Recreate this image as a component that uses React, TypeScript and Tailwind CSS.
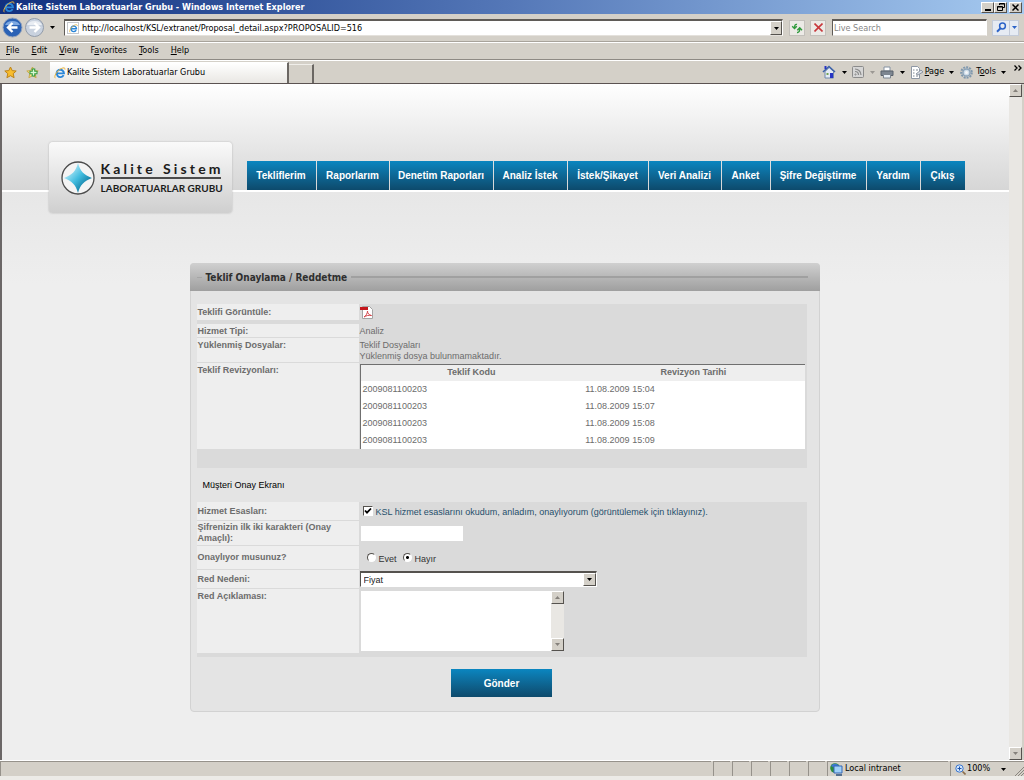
import React, { useState } from 'react';

const navItems = [
  { label: 'Tekliflerim', width: 'w-[69px]' },
  { label: 'Raporlarım', width: 'w-[72px]' },
  { label: 'Denetim Raporları', width: 'w-[103px]' },
  { label: 'Analiz İstek', width: 'w-[73px]' },
  { label: 'İstek/Şikayet', width: 'w-[80px]' },
  { label: 'Veri Analizi', width: 'w-[72px]' },
  { label: 'Anket', width: 'w-[48px]' },
  { label: 'Şifre Değiştirme', width: 'w-[95px]' },
  { label: 'Yardım', width: 'w-[53px]' },
  { label: 'Çıkış', width: 'w-[44px]' },
];

const revisions = [
  { code: '2009081100203', date: '11.08.2009 15:04' },
  { code: '2009081100203', date: '11.08.2009 15:07' },
  { code: '2009081100203', date: '11.08.2009 15:08' },
  { code: '2009081100203', date: '11.08.2009 15:09' },
];

const menus = [
  ['', 'F', 'ile'],
  ['', 'E', 'dit'],
  ['', 'V', 'iew'],
  ['F', 'a', 'vorites'],
  ['', 'T', 'ools'],
  ['', 'H', 'elp'],
];

const raised = 'border border-t-white border-l-white border-r-[#55524e] border-b-[#55524e] bg-[#d4d0c8]';

const Arrow = ({ up = false, color = '#000' }: { up?: boolean; color?: string }) => (
  <svg width="5" height="3" viewBox="0 0 5 3" fill={color} className="shrink-0">
    <path d={up ? 'M0 3h5L2.5 0z' : 'M0 0h5L2.5 3z'} />
  </svg>
);

const IeLogo = ({ size = 12 }: { size?: number }) => (
  <svg width={size} height={size} viewBox="0 0 12 12" fill="none" className="shrink-0">
    <path d="M9.6 8.1A3.7 3.7 0 1 1 10 6.4H3.2" stroke="#2a86d8" strokeWidth="1.9" />
    <path d="M1.4 11.2C-.6 9.6 3 3.6 7.2 1.6 9.6.4 11.4.6 11 2.6" stroke="#e8b33c" strokeWidth="1" />
  </svg>
);

const TitleBar = () => (
  <div className="flex h-[14px] items-center bg-linear-to-r from-[#12307f] via-[#5578b8] to-[#a6caf0] pl-[3px] pr-[2px]">
    <IeLogo />
    <span className="ml-px flex-1 whitespace-nowrap text-[9px] leading-[14px] font-bold text-white">
      Kalite Sistem Laboratuarlar Grubu - Windows Internet Explorer
    </span>
    <button aria-label="Minimize" className={`flex h-[11px] w-[13px] items-end justify-center pb-px ${raised}`}>
      <svg width="6" height="2"><path d="M0 0h6v2H0z" /></svg>
    </button>
    <button aria-label="Restore" className={`flex h-[11px] w-[13px] items-center justify-center ${raised}`}>
      <svg width="8" height="8" fill="none" stroke="#000"><path d="M2.5 2V.5h5v4H6M.5 3.5h5v4h-5zM2.5 1h5M.5 4h5" /></svg>
    </button>
    <button aria-label="Close" className={`ml-[2px] flex h-[11px] w-[13px] items-center justify-center ${raised}`}>
      <svg width="7" height="7" stroke="#000" strokeWidth="1.5"><path d="M.5.5l6 6M6.5.5l-6 6" /></svg>
    </button>
  </div>
);

const AddressBar = () => (
  <div className="flex h-[28px] items-center border-b border-[#a8a39b] pl-[2px] pr-[5px]">
    <button aria-label="Back">
      <svg width="21" height="21" viewBox="0 0 21 21">
        <circle cx="10.5" cy="10.5" r="9.5" fill="#2b62b5" stroke="#93a3bd" />
        <path d="M3 8a8 6 0 0 1 15 0z" fill="#7ea9e2" />
        <path d="M15.5 10.5H6.5M10.5 6l-4.5 4.5 4.5 4.5" stroke="#fff" strokeWidth="2.4" fill="none" />
      </svg>
    </button>
    <button aria-label="Forward" className="ml-px">
      <svg width="21" height="21" viewBox="0 0 21 21">
        <circle cx="10.5" cy="10.5" r="9" fill="#c9d2df" stroke="#929cab" />
        <path d="M3 8a8 6 0 0 1 15 0z" fill="#e9edf3" />
        <path d="M5.5 10.5h9M10.5 6l4.5 4.5-4.5 4.5" stroke="#fff" strokeWidth="2.4" fill="none" />
      </svg>
    </button>
    <button aria-label="Recent pages" className="ml-[5px]"><Arrow /></button>
    <div className="ml-[9px] flex h-[17px] flex-1 items-center border border-t-2 border-[#5f5b57] border-r-white border-b-[#e4e1dc] bg-white pl-[2px]">
      <div className="flex size-[12px] items-center justify-center border border-[#c5c8cc]"><IeLogo size={9} /></div>
      <input
        aria-label="Address"
        defaultValue="http://localhost/KSL/extranet/Proposal_detail.aspx?PROPOSALID=516"
        className="ml-[3px] min-w-0 flex-1 text-[9px] leading-[13px] outline-none"
      />
      <button aria-label="Show addresses" className={`flex h-[14px] w-[12px] items-center justify-center ${raised}`}><Arrow /></button>
    </div>
    <button aria-label="Refresh" className="ml-[6px] flex size-[16px] items-center justify-center border border-[#c3c0bb] bg-[#eceae6]">
      <svg width="12" height="12" viewBox="0 0 12 12" fill="none" stroke="#2f9a3c" strokeWidth="1.4">
        <path d="M6 2.5C4.5 2 3.5 3 3.5 6M1.2 4.2l2.3 2.3 2.3-2.3M6 10.5c1.8.2 2.7-1 2.7-4M6.3 8.2l2.4-2.5 2.3 2.5" />
      </svg>
    </button>
    <button aria-label="Stop" className="ml-[5px] flex size-[16px] items-center justify-center border border-[#c3c0bb] bg-[#eceae6]">
      <svg width="9" height="9" stroke="#c8383c" strokeWidth="1.6"><path d="M.5.5l8 8M8.5.5l-8 8" /></svg>
    </button>
    <input
      aria-label="Live Search"
      placeholder="Live Search"
      className="ml-[6px] h-[17px] w-[155px] border border-t-2 border-[#5f5b57] border-r-white border-b-[#e4e1dc] bg-white pl-px text-[9px] leading-[13px] outline-none placeholder:text-[#858585]"
    />
    <div className="ml-[5px] flex h-[16px] border border-[#c3cbd9] bg-[#e6ebf3]">
      <button aria-label="Search" className="flex w-[16px] items-center justify-center">
        <svg width="11" height="11" fill="none" stroke="#2c63c8"><circle cx="6.5" cy="4" r="2.9" strokeWidth="1.5" /><path d="M4.5 6.2L1 9.8" strokeWidth="2" /></svg>
      </button>
      <button aria-label="Search options" className="flex w-[9px] items-center justify-center border-l border-[#c3cbd9]"><Arrow color="#2c63c8" /></button>
    </div>
  </div>
);

const MenuBar = () => (
  <div className="flex h-[18px] items-center gap-3 border-t border-b border-t-white border-b-[#8e8a84] pl-[6px] text-[9px]">
    {menus.map(([before, key, after]) => (
      <button key={key + after}>{before}<span className="underline">{key}</span>{after}</button>
    ))}
  </div>
);

const StarIcon = ({ plus = false }: { plus?: boolean }) => (
  <svg width="13" height="13" viewBox="0 0 13 13">
    <path d="M6.5 1l1.7 3.6 4 .4-3 2.7.9 4-3.6-2-3.6 2 .9-4-3-2.7 4-.4z" fill={plus ? '#f4e08a' : '#f8bd2e'} stroke={plus ? '#c9a94a' : '#bd8317'} />
    {plus && <path d="M7.5 2.5v8M3.5 6.5h8" stroke="#2f9a3c" strokeWidth="3.6" />}
    {plus && <path d="M7.5 3.5v6M4.5 6.5h6" stroke="#d9f5d4" strokeWidth="1.4" />}
  </svg>
);

const TabBar = () => (
  <div className="flex h-[24px] items-end border-t border-b border-t-white border-b-[#5b5351]">
    <div className="flex h-full items-center gap-[9px] pl-1 pr-[11px]">
      <button aria-label="Favorites Center"><StarIcon /></button>
      <button aria-label="Add to Favorites"><StarIcon plus /></button>
    </div>
    <button className="flex h-[21px] w-[239px] items-center border-t border-r-2 border-t-white border-r-[#6b6763] bg-linear-to-b from-white to-[#e9e7e3] pl-1 text-[9px]">
      <IeLogo />
      <span className="ml-px">Kalite Sistem Laboratuarlar Grubu</span>
    </button>
    <button aria-label="New Tab" className="h-[19px] w-[25px] border-t border-r-2 border-t-[#f0eeea] border-r-[#6b6763]" />
    <div className="ml-auto flex h-full items-center pr-[2px] text-[9px]">
      <button aria-label="Home" className="flex items-center gap-[6px]">
        <svg width="14" height="14" viewBox="0 0 14 14">
          <path d="M3 6.5V13h8.5V6.5L7.2 2.5z" fill="#e4ebf5" stroke="#7088ad" />
          <path d="M1 7l6-5.5L13 7" fill="none" stroke="#3d62a8" strokeWidth="1.6" />
          <path d="M2.5 1h2v3h-2z" fill="#2634c4" /><path d="M8 8h3v5H8z" fill="#2634c4" /><path d="M4.5 8h2v2h-2z" fill="#74a354" />
        </svg>
        <Arrow />
      </button>
      <button aria-label="Feeds" className="ml-[5px] flex items-center gap-[6px]">
        <svg width="12" height="12" fill="none" stroke="#8b8b8b">
          <rect x=".5" y=".5" width="11" height="11" rx="1" fill="#d6d6d6" /><path d="M3 3a6 6 0 0 1 6 6M3 5.5A3.5 3.5 0 0 1 6.5 9" strokeWidth="1.2" /><circle cx="3.5" cy="8.5" r=".6" />
        </svg>
        <Arrow color="#9b9893" />
      </button>
      <button aria-label="Print" className="ml-[5px] flex items-center gap-[6px]">
        <svg width="14" height="13" viewBox="0 0 14 13">
          <path d="M4 1h6v4H4z" fill="#fff" stroke="#8592a2" /><path d="M1 5h12v4.5H1z" fill="#7d8691" stroke="#59616b" /><path d="M3.5 8.5h7v3.5h-7z" fill="#e9f0f7" stroke="#7d8691" />
        </svg>
        <Arrow />
      </button>
      <button className="ml-[5px] flex items-center">
        <svg width="14" height="13" viewBox="0 0 14 13" fill="none">
          <path d="M1.5.5h6l2 2v10h-8z" fill="#fff" stroke="#8f98a5" /><path d="M3 4h1.5M3 7h1.5M3 10h1.5M6 4h2M6 10h2" stroke="#7d8691" /><path d="M6 8l5-4 2 2-5 3z" fill="#d6dbe2" stroke="#8f98a5" />
        </svg>
        <span className="ml-px mr-[5px]"><span className="underline">P</span>age</span>
        <Arrow />
      </button>
      <button className="ml-[6px] flex items-center">
        <svg width="13" height="13" viewBox="0 0 13 13" fill="none">
          <circle cx="6.5" cy="6.5" r="5.3" stroke="#7f97ad" strokeWidth="2" strokeDasharray="2 1" /><circle cx="6.5" cy="6.5" r="3.6" fill="#cfdde9" stroke="#8ba3b9" strokeWidth="1.5" /><circle cx="6.5" cy="6.5" r="1.5" fill="#f4f6f8" />
        </svg>
        <span className="ml-[3px] mr-[5px]">T<span className="underline">o</span>ols</span>
        <Arrow />
      </button>
      <button aria-label="More commands" className="mb-[8px] ml-[8px]">
        <svg width="8" height="6" fill="none" stroke="#000" strokeWidth="1.3"><path d="M.5.5l2.5 2.5L.5 5.5M4.5.5L7 3 4.5 5.5" /></svg>
      </button>
    </div>
  </div>
);

const ScrollBar = ({ className = '' }: { className?: string }) => (
  <div className={`flex w-[13px] shrink-0 flex-col justify-between bg-[#e9e7e3] ${className}`}>
    <button type="button" aria-label="Scroll up" className={`flex h-[13px] items-center justify-center ${raised}`}><Arrow up color="#85817b" /></button>
    <button type="button" aria-label="Scroll down" className={`flex h-[13px] items-center justify-center ${raised}`}><Arrow color="#85817b" /></button>
  </div>
);

const Logo = () => (
  <a href="#" className="flex h-[71px] w-[183px] shrink-0 items-center rounded-[4px] bg-linear-to-b from-[#fafafa] to-[#cfcfcf] pl-[12px] shadow-[0_0_2px_#aaa]">
    <svg width="34" height="34" viewBox="0 0 34 34" className="shrink-0">
      <defs>
        <linearGradient id="star" x1="0" y1="0" x2="1" y2="1">
          <stop offset="0.15" stopColor="#c9f1fb" />
          <stop offset="0.5" stopColor="#41bcdf" />
          <stop offset="0.85" stopColor="#04688f" />
        </linearGradient>
      </defs>
      <circle cx="17" cy="17" r="16" fill="#f4f4f4" stroke="#4b4b4b" strokeWidth="1.3" />
      <path d="M17 2c2 8 6 12 14 15-8 3-12 7-14 15-2-8-6-12-14-15C11 14 15 10 17 2z" fill="url(#star)" />
    </svg>
    <span className="ml-[6px] flex w-[120px] flex-col font-[Lato,sans-serif] text-[#1c1c1c]">
      <span className="flex justify-between border-b-2 border-[#4b4b4b] text-[14px] leading-[17px] font-bold">
        {'Kalite'.split('').map((c, i) => <span key={i}>{c}</span>)}
        <span className="w-1" />
        {'Sistem'.split('').map((c, i) => <span key={i}>{c}</span>)}
      </span>
      <span className="mt-[2px] text-[10px] leading-[14px] font-bold whitespace-nowrap">LABORATUARLAR GRUBU</span>
    </span>
  </a>
);

const SiteHeader = () => (
  <header className="mx-auto mt-[58px] flex w-[914px] max-w-full items-start">
    <Logo />
    <nav className="mt-[19px] ml-[15px] flex gap-px">
      {navItems.map((item) => (
        <a
          key={item.label}
          href="#"
          className={`${item.width} flex h-[29px] items-center justify-center bg-linear-to-b from-[#0a86c0] to-[#0d4a6c] text-[10px] font-bold whitespace-nowrap text-white`}
        >
          {item.label}
        </a>
      ))}
    </nav>
  </header>
);

const PdfIcon = () => (
  <svg width="13" height="13" viewBox="0 0 13 13" fill="none">
    <path d="M2.5.5h7l3 3v9h-10z" fill="#fff" stroke="#a3a3a3" />
    <path d="M0 1h8v3H0z" fill="#c4161c" />
    <path d="M4 11c2-1 3.5-4 3.5-6 0 2.5 1.5 4 4 4.5-3-.5-5 0-7.5 1.5z" stroke="#d3444a" />
  </svg>
);

type RowProps = { label: string; htmlFor?: string; height: string; top?: boolean; children: React.ReactNode };

const Row = ({ label, htmlFor, height, top = false, children }: RowProps) => (
  <div className={`flex border-b border-[#dadada] ${height}`}>
    <div className={`flex w-[162px] shrink-0 flex-col bg-[#eeeeee] pl-px font-bold ${top ? 'pt-[2px]' : 'justify-center'}`}>
      <label htmlFor={htmlFor}>{label}</label>
    </div>
    <div className="min-w-0 flex-1 pl-px">{children}</div>
  </div>
);

const Radio = ({ label, checked, onChange }: { label: string; checked: boolean; onChange: () => void }) => (
  <label className="flex items-center gap-[3px]">
    <input
      type="radio"
      name="approve"
      checked={checked}
      onChange={onChange}
      className="size-[9px] appearance-none rounded-full border border-t-[#55524e] border-r-white border-b-white border-l-[#55524e] bg-white checked:bg-[radial-gradient(#000_0_1px,#fff_2px)]"
    />
    <span className="pt-[3px]">{label}</span>
  </label>
);

const ProposalForm = () => {
  const [accepted, setAccepted] = useState(true);
  const [approved, setApproved] = useState(false);

  return (
    <form className="mx-auto mt-[50px] mb-[48px] w-[630px] max-w-full rounded-[4px] border border-[#d2d2d2] bg-[#e4e4e4]" onSubmit={(e) => e.preventDefault()}>
      <div className="-mx-px -mt-px flex h-[28px] items-center rounded-t-[4px] bg-linear-to-b from-[#d0d0d0] to-[#9f9f9f] pr-[12px] pl-[7px]">
        <span className="h-px w-[5px] bg-[#a5a5a5]" />
        <h1 className="mx-1 font-['DejaVu_Sans_Condensed','DejaVu_Sans',sans-serif] text-[10px] font-bold text-[#2f2f2f]">Teklif Onaylama / Reddetme</h1>
        <span className="h-[2px] flex-1 bg-[#a0a0a0]" />
      </div>

      <div className="mx-[6px] mt-[13px] mr-[12px] bg-[#dadada] pb-[3px] text-[9px] leading-[11px] text-[#6c6c6c]">
        <Row label="Teklifi Görüntüle:" height="h-[17px]">
          <a href="#" aria-label="PDF" className="mt-[2px] inline-block"><PdfIcon /></a>
        </Row>
        <div className="h-[3px]" />
        <Row top label="Hizmet Tipi:" height="h-[14px]"><p className="pt-[2px]">Analiz</p></Row>
        <Row top label="Yüklenmiş Dosyalar:" height="h-[25px]">
          <p className="pt-[2px]">Teklif Dosyaları</p>
          <p>Yüklenmiş dosya bulunmamaktadır.</p>
        </Row>
        <Row top label="Teklif Revizyonları:" height="h-[87px]">
          <table className="mt-px w-[calc(100%-2px)] table-fixed border-t border-l border-[#6f6f6f] bg-white">
            <thead>
              <tr className="h-[16px] bg-[#eeeeee]">
                <th className="font-bold">Teklif Kodu</th>
                <th className="font-bold">Revizyon Tarihi</th>
              </tr>
            </thead>
            <tbody>
              {revisions.map((r) => (
                <tr key={r.date} className="h-[17px]">
                  <td className="pl-[2px]">{r.code}</td>
                  <td className="pl-[3px]">{r.date}</td>
                </tr>
              ))}
            </tbody>
          </table>
        </Row>
        <div className="h-[18px]" />
        <div className="flex h-[34px] items-center bg-[#e4e4e4] pl-[6px] text-black">Müşteri Onay Ekranı</div>
        <Row label="Hizmet Esasları:" htmlFor="accept" height="h-[19px]">
          <div className="flex h-full items-center gap-[3px] pl-[3px]">
            <span className="relative flex size-[10px]">
              <input
                id="accept"
                type="checkbox"
                checked={accepted}
                onChange={(e) => setAccepted(e.target.checked)}
                className="size-[10px] appearance-none border border-t-[#55524e] border-r-white border-b-white border-l-[#55524e] bg-white"
              />
              {accepted && (
                <svg width="10" height="10" fill="none" stroke="#000" strokeWidth="1.8" className="pointer-events-none absolute inset-0"><path d="M2 4.5l2 2.2 4-4.2" /></svg>
              )}
            </span>
            <a href="#" className="pt-[2px] text-[#1f4e6b]">KSL hizmet esaslarını okudum, anladım, onaylıyorum (görüntülemek için tıklayınız).</a>
          </div>
        </Row>
        <Row label="Şifrenizin ilk iki karakteri (Onay Amaçlı):" htmlFor="password" height="h-[25px]">
          <div className="flex h-full items-center pl-px">
            <input id="password" type="password" className="h-[15px] w-[102px] bg-white outline-none" />
          </div>
        </Row>
        <Row label="Onaylıyor musunuz?" height="h-[24px]">
          <div className="flex h-full items-center gap-[6px] pl-[7px] text-[#333]">
            <Radio label="Evet" checked={approved} onChange={() => setApproved(true)} />
            <Radio label="Hayır" checked={!approved} onChange={() => setApproved(false)} />
          </div>
        </Row>
        <Row label="Red Nedeni:" htmlFor="reason" height="h-[19px]">
          <div className="flex h-full items-center">
            <div className="relative w-[237px]">
              <select id="reason" className="block h-[16px] w-full appearance-none border border-t-2 border-t-[#55524e] border-r-white border-b-white border-l-[#55524e] bg-white pl-[3px] text-[9px] leading-[12px] text-[#222] outline-none">
                <option>Fiyat</option>
              </select>
              <span className={`pointer-events-none absolute top-[2px] right-px flex h-[13px] w-[13px] items-center justify-center ${raised}`}><Arrow /></span>
            </div>
          </div>
        </Row>
        <Row top label="Red Açıklaması:" htmlFor="note" height="h-[65px]">
          <div className="mt-[2px] ml-px flex h-[60px] w-[203px] bg-white">
            <textarea id="note" className="min-w-0 flex-1 resize-none bg-white outline-none" />
            <ScrollBar />
          </div>
        </Row>
      </div>

      <div className="flex justify-center pt-[12px] pr-[6px] pb-[14px]">
        <button type="submit" className="h-[28px] w-[101px] bg-linear-to-b from-[#0a86c0] to-[#0d4a6c] text-[10px] font-bold text-white">
          Gönder
        </button>
      </div>
    </form>
  );
};

const StatusBar = () => (
  <div className="flex h-[20px] border-t border-b-4 border-t-white border-b-[#ecebe7] bg-[#d4d0c8] text-[9px]">
    <div className="flex-1 border-t border-l border-[#96928b]" />
    {[0, 1, 2, 3, 4, 5].map((i) => (
      <div key={i} className="ml-[2px] w-[17px] border-t border-l border-[#96928b]" />
    ))}
    <div className="ml-[2px] flex w-[121px] items-center gap-[2px] border-t border-l border-[#96928b] pl-[2px]">
      <svg width="13" height="13" viewBox="0 0 13 13">
        <circle cx="5" cy="5" r="4.8" fill="#2c8b3c" /><path d="M1 3c2-3 6-3 8 0L5 5z" fill="#3d78d6" />
        <path d="M4 3h8v7H4z" fill="#9fd0f8" stroke="#3467b5" /><path d="M6 12h6" stroke="#55708f" strokeWidth="2" />
      </svg>
      Local intranet
    </div>
    <button className="ml-[2px] flex w-[74px] items-center border-t border-l border-[#96928b] pl-1">
      <svg width="11" height="11" viewBox="0 0 11 11" fill="none">
        <circle cx="4.5" cy="4.5" r="3.7" fill="#d3e6fb" stroke="#3a76cf" /><path d="M4.5 2.5v4M2.5 4.5h4" stroke="#1d54ad" /><path d="M7.5 7.5l3 3" stroke="#8a6d4c" strokeWidth="1.6" />
      </svg>
      <span className="mr-auto ml-px">100%</span>
      <Arrow />
      <svg width="10" height="12" stroke="#8a867f" className="ml-[8px] self-end"><path d="M1 12L10 3M4 12l6-6M7 12l3-3" /></svg>
    </button>
  </div>
);

export default function App() {
  return (
    <div className="flex min-h-screen flex-col bg-[#d4d0c8] font-['DejaVu_Sans_Condensed','DejaVu_Sans',sans-serif] text-black">
      <TitleBar />
      <AddressBar />
      <MenuBar />
      <TabBar />
      <div className="flex flex-1 border-l-2 border-[#6b6767]">
        <main className="min-w-0 flex-1 bg-[#eeeeee] bg-[linear-gradient(#ffffff,#d6d6d6_106px,#ffffff_106px,#ffffff_108px,#e7e7e7_108px,#eeeeee_200px)] bg-no-repeat font-['Liberation_Sans',Arial,sans-serif]">
          <div className="flow-root">
            <SiteHeader />
            <div className="flow-root pr-[2px]">
              <ProposalForm />
            </div>
          </div>
        </main>
        <ScrollBar className="mr-[2px]" />
      </div>
      <StatusBar />
    </div>
  );
}
